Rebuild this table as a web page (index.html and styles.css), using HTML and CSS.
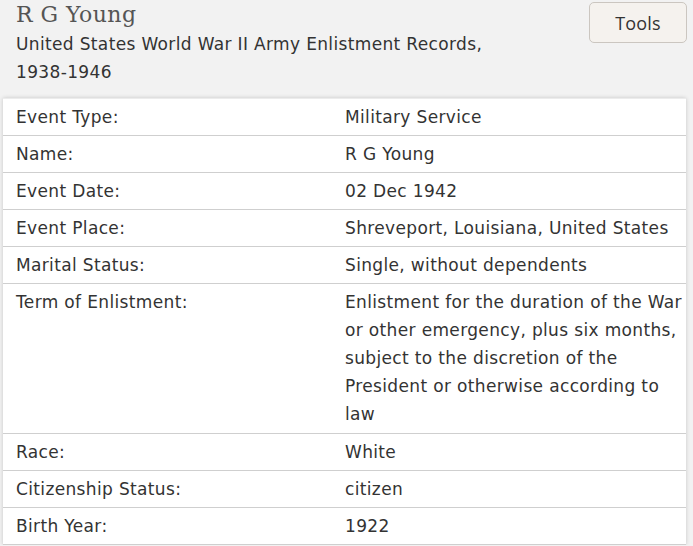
FILE: index.html
```html
<!DOCTYPE html>
<html lang="en">
<head>
<meta charset="utf-8">
<title>R G Young</title>
<link rel="stylesheet" href="styles.css">
</head>
<body>
<header class="header">
  <div class="heading">
    <h1 class="title">R G Young</h1>
    <p class="collection">United States World War II Army Enlistment Records, 1938-1946</p>
  </div>
  <button class="tools" type="button">Tools</button>
</header>
<main class="card">
  <div class="row"><div class="label">Event Type:</div><div class="value">Military Service</div></div>
  <div class="row"><div class="label">Name:</div><div class="value">R G Young</div></div>
  <div class="row"><div class="label">Event Date:</div><div class="value">02 Dec 1942</div></div>
  <div class="row"><div class="label">Event Place:</div><div class="value">Shreveport, Louisiana, United States</div></div>
  <div class="row"><div class="label">Marital Status:</div><div class="value">Single, without dependents</div></div>
  <div class="row"><div class="label">Term of Enlistment:</div><div class="value">Enlistment for the duration of the War or other emergency, plus six months, subject to the discretion of the President or otherwise according to law</div></div>
  <div class="row"><div class="label">Race:</div><div class="value">White</div></div>
  <div class="row"><div class="label">Citizenship Status:</div><div class="value">citizen</div></div>
  <div class="row"><div class="label">Birth Year:</div><div class="value">1922</div></div>
</main>
</body>
</html>
```
FILE: styles.css
```css
html, body {
  margin: 0;
  padding: 0;
  background: #f2f2f2;
}
body {
  font-family: "DejaVu Sans", Verdana, sans-serif;
  color: #333333;
  font-size: 17px;
  letter-spacing: 0.35px;
  overflow: hidden;
}
.header {
  display: flex;
  justify-content: space-between;
  align-items: flex-start;
  padding: 0 6px 0 16px;
}
.heading {
  width: 500px;
}
.title {
  margin: 0;
  font-family: "DejaVu Serif", "Liberation Serif", serif;
  font-weight: normal;
  font-size: 22px;
  letter-spacing: 0.45px;
  line-height: 30px;
  color: #555555;
}
.collection {
  margin: 0;
  line-height: 28px;
  color: #333333;
}
.tools {
  margin-top: 2px;
  width: 98px;
  height: 41px;
  background: #f5f2ee;
  border: 1px solid #cbc6c0;
  border-radius: 5px;
  font-family: "Open Sans", "Liberation Sans", sans-serif;
  font-size: 18px;
  letter-spacing: 0.2px;
  color: #333333;
  padding: 0;
}
.card {
  margin: 12px 7px 0 3px;
  background: #ffffff;
  box-shadow: 0 0 4px rgba(0, 0, 0, 0.18);
  border-top: 1px solid #ececec;
}
.row {
  display: grid;
  grid-template-columns: 329px 1fr;
  padding: 4px 1px 4px 13px;
  line-height: 28px;
  border-bottom: 1px solid #cfcfcf;
}
.row:nth-child(6) {
  padding-bottom: 5px;
}
```
